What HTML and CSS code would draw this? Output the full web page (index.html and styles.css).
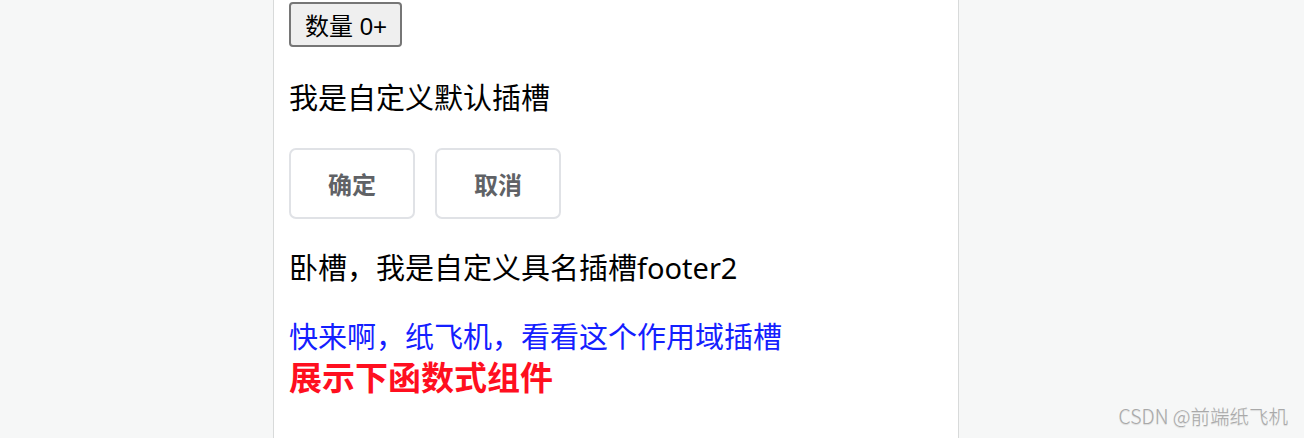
FILE: index.html
```html
<!DOCTYPE html>
<html lang="zh">
<head>
<meta charset="utf-8">
<title>slots</title>
<link rel="stylesheet" href="styles.css">
</head>
<body>
<div class="page">
  <div class="panel">
    <button class="count-btn">数量 0+</button>
    <p class="line default-slot">我是自定义默认插槽</p>
    <div class="actions">
      <button class="el-btn">确定</button>
      <button class="el-btn">取消</button>
    </div>
    <p class="line named-slot">卧槽，我是自定义具名插槽footer2</p>
    <div class="scoped">
      <div class="blue">快来啊，纸飞机，看看这个作用域插槽</div>
      <div class="red">展示下函数式组件</div>
    </div>
  </div>
</div>
<div class="watermark">CSDN @前端纸飞机</div>
</body>
</html>
```
FILE: styles.css
```css
html, body {
  margin: 0;
  padding: 0;
  height: 100%;
}
body {
  background: #f6f7f7;
  font-family: "Liberation Sans", "Noto Sans CJK SC", sans-serif;
  color: #000;
  overflow: hidden;
}
.page {
  display: flex;
  justify-content: flex-start;
  height: 100%;
  padding-left: 273px;
}
.panel {
  width: 686px;
  background: #fff;
  border-left: 1px solid #d8dada;
  border-right: 1px solid #d8dada;
  padding: 2px 16px 0 15px;
  box-sizing: border-box;
  height: 100%;
}
.count-btn {
  display: block;
  height: 45px;
  padding: 0 13px 0 14px;
  font-family: "Liberation Sans", "Noto Sans CJK SC", sans-serif;
  font-size: 24px;
  color: #000;
  background: #efefef;
  border: 2px solid #767676;
  border-radius: 4px;
  box-sizing: border-box;
}
.line {
  margin: 0;
  font-size: 29px;
  line-height: 40px;
}
.default-slot {
  margin-top: 32px;
}
.actions {
  display: flex;
  gap: 20px;
  margin-top: 29px;
}
.el-btn {
  width: 126px;
  height: 71px;
  background: #fff;
  border: 2px solid #e0e2e6;
  border-radius: 7px;
  font-family: "Liberation Sans", "Noto Sans CJK SC", sans-serif;
  font-size: 24px;
  font-weight: bold;
  color: #606266;
  box-sizing: border-box;
}
.named-slot {
  margin-top: 29px;
  font-family: "Noto Sans", "Noto Sans CJK SC", sans-serif;
}
.scoped {
  margin-top: 30px;
}
.blue {
  color: #1420ff;
  font-size: 29px;
  line-height: 40px;
}
.red {
  color: #ff0f1f;
  font-size: 33px;
  font-weight: bold;
  line-height: 42px;
}
.watermark {
  position: absolute;
  right: 16px;
  bottom: 8px;
  font-family: "Noto Sans CJK SC", sans-serif;
  font-size: 19.5px;
  font-weight: 300;
  color: #a9a9a9;
  text-shadow: 0 1px 1px rgba(0,0,0,0.12);
}
```
